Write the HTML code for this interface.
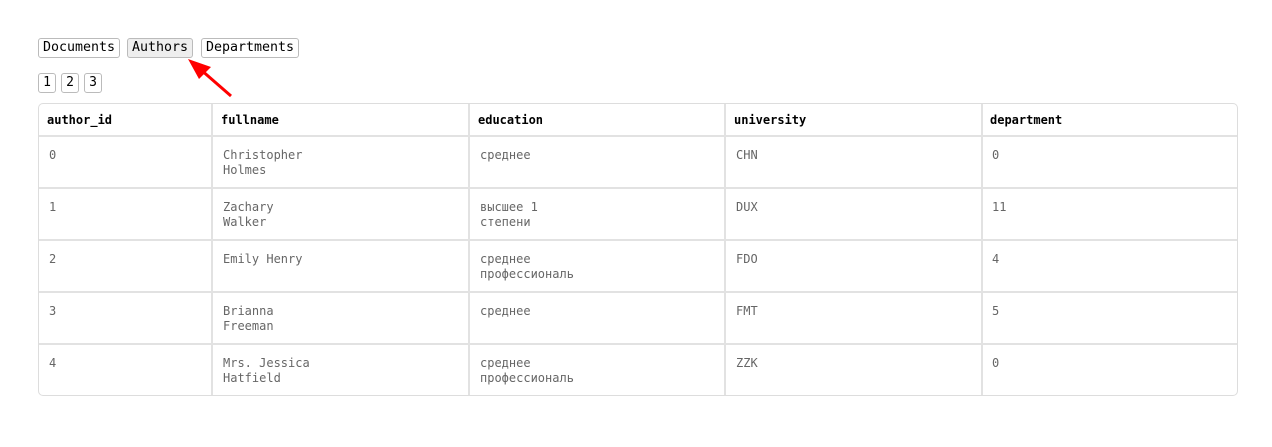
<!DOCTYPE html>
<html><head><meta charset="utf-8"><style>
body{margin:0;width:1272px;height:447px;background:#fff;font-family:"DejaVu Sans Mono","Liberation Mono",monospace;position:relative;overflow:hidden}
.btn{position:absolute;border:1px solid #bbb;border-radius:3px;font-size:13.3px;line-height:18px;padding:0 4px;color:#000;background:#fff}
.pb{position:absolute;border:1px solid #bbb;border-radius:3px;font-size:13px;line-height:18px;width:16px;text-align:center}
.tbl{position:absolute;left:38px;top:103px;width:1198px;height:291px;border:1px solid #ddd;border-radius:5px}
.h{position:absolute;left:0;width:1198px;height:2px;background:#e2e2e2}
.v{position:absolute;top:0;width:2px;height:291px;background:#e2e2e2}
.t{position:absolute;font-size:12px;line-height:15px;color:#666;white-space:pre}
.th{position:absolute;font-size:12px;font-weight:bold;color:#000;top:9px}
</style></head><body>
<div class="btn" style="left:38px;top:38px">Documents</div>
<div class="btn" style="left:127px;top:38px;background:#eee">Authors</div>
<div class="btn" style="left:201px;top:38px">Departments</div>
<div class="pb" style="left:38px;top:73px">1</div>
<div class="pb" style="left:61px;top:73px">2</div>
<div class="pb" style="left:84px;top:73px">3</div>
<svg style="position:absolute;left:0;top:0" width="300" height="110"><line x1="231" y1="96" x2="200" y2="69" stroke="#f00" stroke-width="3"/><polygon points="188,59 211,67 199,79" fill="#f00"/></svg>
<div class="tbl">
<div class="h" style="top:31px"></div><div class="h" style="top:83px"></div><div class="h" style="top:135px"></div><div class="h" style="top:187px"></div><div class="h" style="top:239px"></div>
<div class="v" style="left:172px"></div><div class="v" style="left:429px"></div><div class="v" style="left:685px"></div><div class="v" style="left:942px"></div>
<div class="th" style="left:8px">author_id</div><div class="th" style="left:182px">fullname</div><div class="th" style="left:439px">education</div><div class="th" style="left:695px">university</div><div class="th" style="left:951px">department</div>

<div class="t" style="left:10px;top:44px">0</div><div class="t" style="left:184px;top:44px">Christopher
Holmes</div><div class="t" style="left:441px;top:44px">среднее</div><div class="t" style="left:697px;top:44px">CHN</div><div class="t" style="left:953px;top:44px">0</div>

<div class="t" style="left:10px;top:96px">1</div><div class="t" style="left:184px;top:96px">Zachary
Walker</div><div class="t" style="left:441px;top:96px">высшее 1
степени</div><div class="t" style="left:697px;top:96px">DUX</div><div class="t" style="left:953px;top:96px">11</div>

<div class="t" style="left:10px;top:148px">2</div><div class="t" style="left:184px;top:148px">Emily Henry</div><div class="t" style="left:441px;top:148px">среднее
профессиональ</div><div class="t" style="left:697px;top:148px">FDO</div><div class="t" style="left:953px;top:148px">4</div>

<div class="t" style="left:10px;top:200px">3</div><div class="t" style="left:184px;top:200px">Brianna
Freeman</div><div class="t" style="left:441px;top:200px">среднее</div><div class="t" style="left:697px;top:200px">FMT</div><div class="t" style="left:953px;top:200px">5</div>

<div class="t" style="left:10px;top:252px">4</div><div class="t" style="left:184px;top:252px">Mrs. Jessica
Hatfield</div><div class="t" style="left:441px;top:252px">среднее
профессиональ</div><div class="t" style="left:697px;top:252px">ZZK</div><div class="t" style="left:953px;top:252px">0</div>
</div>
</body></html>
